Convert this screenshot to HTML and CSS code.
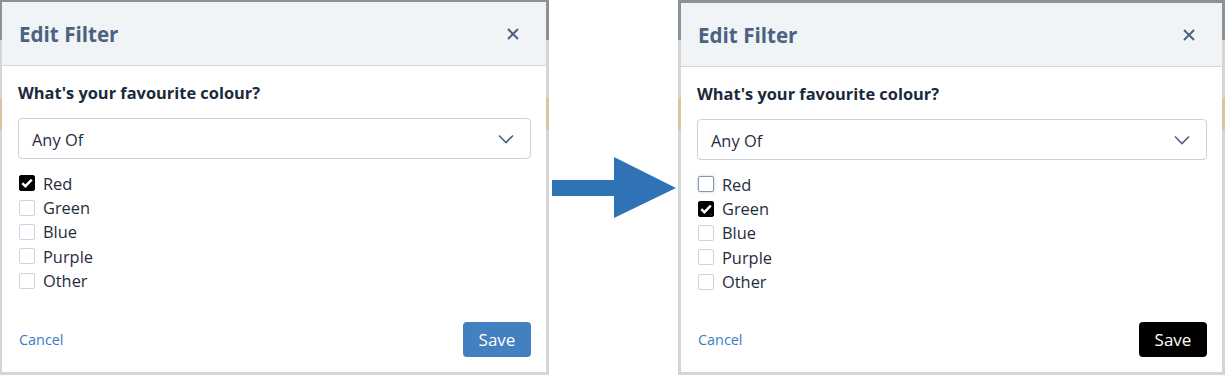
FILE: index.html
```html
<!DOCTYPE html>
<html lang="en">
<head>
    <meta charset="UTF-8">
    <title>Edit Filter - before and after</title>
    <link rel="stylesheet" href="styles.css">
</head>
<body>
    <div class="stage">
        <!-- Before -->
        <div class="frame frame-left">
            <div class="dialog">
                <div class="dialog-header">
                    <h2>Edit Filter</h2>
                    <svg class="close" width="12" height="12" viewBox="0 0 12 12"><path d="M1 1L11 11M11 1L1 11"/></svg>
                </div>
                <div class="dialog-body">
                    <h3>What's your favourite colour?</h3>
                    <div class="select">
                        <span>Any Of</span>
                        <svg class="chevron" width="16" height="10" viewBox="0 0 16 10"><path d="M1 1.5L8 8.5L15 1.5"/></svg>
                    </div>
                    <ul class="options">
                        <li><span class="box checked"><svg width="14" height="14" viewBox="0 0 14 14"><path d="M2.3 7.2L5.4 10.2L11.8 3.6"/></svg></span>Red</li>
                        <li><span class="box"></span>Green</li>
                        <li><span class="box"></span>Blue</li>
                        <li><span class="box"></span>Purple</li>
                        <li><span class="box"></span>Other</li>
                    </ul>
                </div>
                <div class="dialog-footer">
                    <a class="cancel" href="#">Cancel</a>
                    <button class="save">Save</button>
                </div>
            </div>
        </div>

        <div class="arrow">
            <svg width="126" height="62" viewBox="0 0 126 62"><path d="M0 23H62V0L124 31L62 61V39H0Z"/></svg>
        </div>

        <!-- After -->
        <div class="frame frame-right">
            <div class="dialog">
                <div class="dialog-header">
                    <h2>Edit Filter</h2>
                    <svg class="close" width="12" height="12" viewBox="0 0 12 12"><path d="M1 1L11 11M11 1L1 11"/></svg>
                </div>
                <div class="dialog-body">
                    <h3>What's your favourite colour?</h3>
                    <div class="select">
                        <span>Any Of</span>
                        <svg class="chevron" width="16" height="10" viewBox="0 0 16 10"><path d="M1 1.5L8 8.5L15 1.5"/></svg>
                    </div>
                    <ul class="options">
                        <li><span class="box focused"></span>Red</li>
                        <li><span class="box checked"><svg width="14" height="14" viewBox="0 0 14 14"><path d="M2.3 7.2L5.4 10.2L11.8 3.6"/></svg></span>Green</li>
                        <li><span class="box"></span>Blue</li>
                        <li><span class="box"></span>Purple</li>
                        <li><span class="box"></span>Other</li>
                    </ul>
                </div>
                <div class="dialog-footer">
                    <a class="cancel" href="#">Cancel</a>
                    <button class="save save-dark">Save</button>
                </div>
            </div>
        </div>
    </div>
</body>
</html>
```

FILE: styles.css
```css
* {
    margin: 0;
    padding: 0;
    box-sizing: border-box;
    font-family: "Open Sans", "Noto Sans", sans-serif;
}

body {
    background-color: #fff;
    width: 1226px;
    height: 376px;
    overflow: hidden;
}

.stage {
    display: flex;
    align-items: flex-start;
}

/* Grey strip of the page behind each dialog */
.frame {
    height: 375px;
    padding: 2px 3px 3px 2px;
    background: linear-gradient(#8e9196 0 40px, #d5d5d5 40px 98px, #d9c4a2 98px 130px, #d5d5d5 130px);
}

.frame-left {
    width: 549px;
}

.frame-right {
    width: 547px;
    padding: 3px 3px 3px 3px;
}

.dialog {
    display: flex;
    flex-direction: column;
    height: 100%;
    background-color: #fff;
}

.dialog-header {
    display: flex;
    align-items: center;
    justify-content: space-between;
    height: 64px;
    padding: 0 27px 0 17px;
    background-color: #f1f4f7;
    border-bottom: 1px solid #cfd8e2;
}

.dialog-header h2 {
    font-size: 20.6px;
    font-weight: 700;
    color: #4b6281;
    margin-top: 0;
}

.close path {
    stroke: #4b6281;
    stroke-width: 2;
    fill: none;
}

.dialog-body {
    padding: 16px 15px 0 16px;
}

.dialog-body h3 {
    font-size: 16.4px;
    font-weight: 700;
    color: #1a2a3b;
    line-height: 22px;
}

.select {
    display: flex;
    align-items: center;
    justify-content: space-between;
    height: 41px;
    margin-top: 14px;
    padding: 0 16px 0 13px;
    border: 1px solid #c7d3e1;
    border-radius: 4px;
    font-size: 16.4px;
    color: #1f2d3d;
}

.select span {
    margin-top: 2px;
}

.chevron path {
    stroke: #4b6281;
    stroke-width: 1.6;
    fill: none;
}

.options {
    list-style: none;
    margin-top: 12px;
}

.options li {
    display: flex;
    align-items: center;
    height: 24.4px;
    font-size: 16.4px;
    color: #1f2d3d;
}

.box {
    display: flex;
    align-items: center;
    justify-content: center;
    width: 16px;
    height: 16px;
    margin: 0 8px 0 1px;
    border: 1px solid #c9d4e1;
    border-radius: 2px;
    background-color: #fff;
}

.box.checked {
    border-color: #000;
    background-color: #000;
}

.box.checked path {
    stroke: #fff;
    stroke-width: 2.4;
    fill: none;
}

.box.focused {
    border-color: #8696ab;
    box-shadow: 0 0 3px rgba(80, 100, 130, 0.35);
}

.dialog-footer {
    display: flex;
    align-items: center;
    justify-content: space-between;
    margin-top: auto;
    padding: 0 15px 15px 17px;
}

.cancel {
    font-size: 14.4px;
    color: #3b7cc1;
    text-decoration: none;
    margin-top: 0;
}

.save {
    width: 68px;
    height: 35px;
    border: none;
    border-radius: 4px;
    background-color: #4380c0;
    color: #fff;
    font-size: 17px;
    cursor: pointer;
}

.save-dark {
    background-color: #000;
}

.arrow {
    width: 129px;
    padding: 157px 0 0 3px;
}

.arrow path {
    fill: #2f72b6;
}
```
